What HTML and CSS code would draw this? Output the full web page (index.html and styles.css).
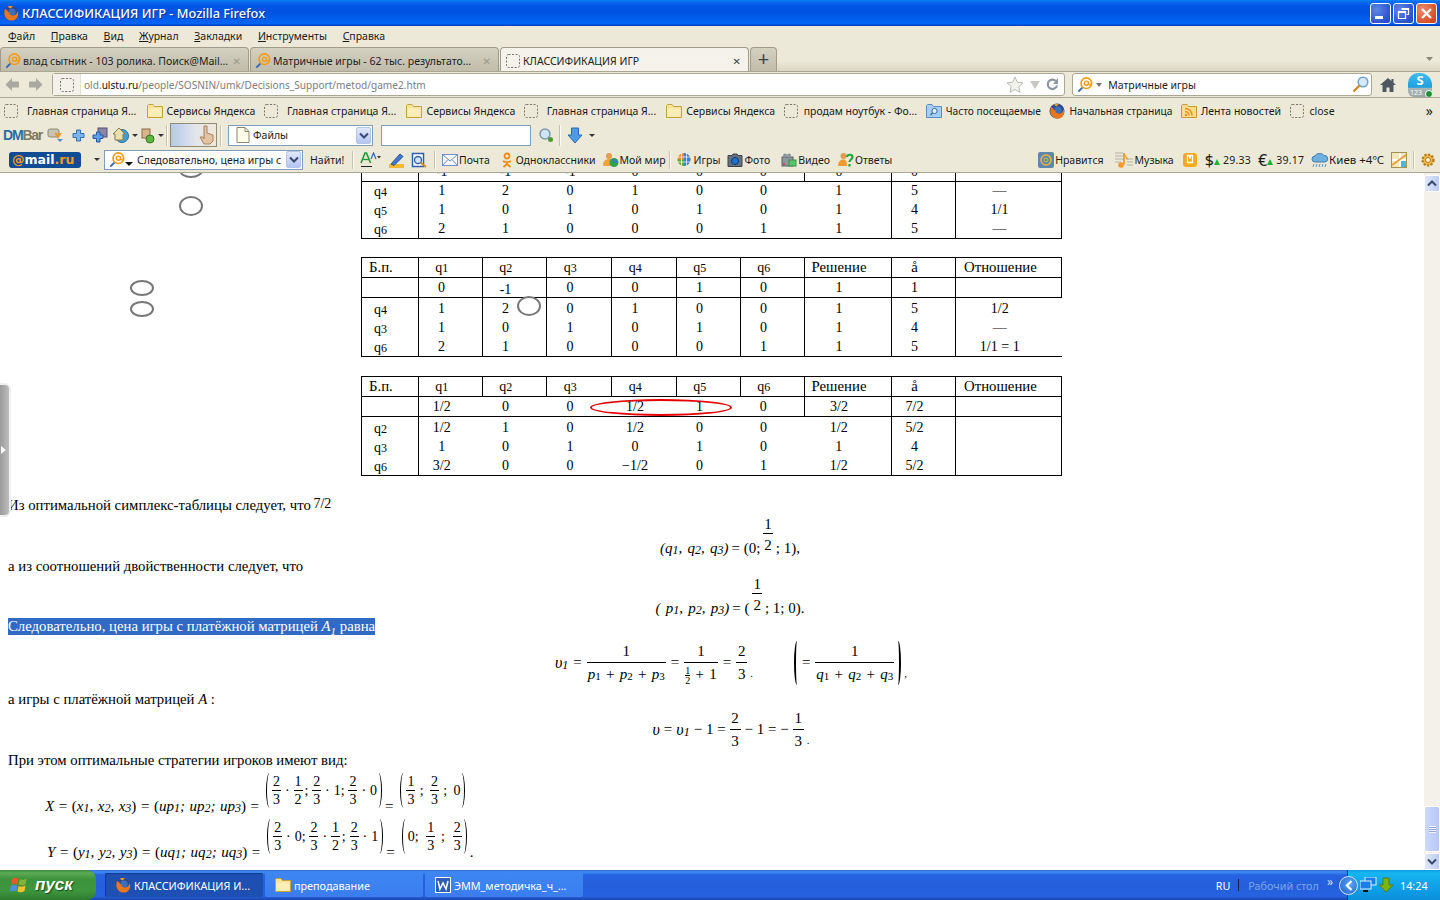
FILE: index.html
```html
<!DOCTYPE html>
<html lang="ru">
<head>
<meta charset="utf-8">
<title>КЛАССИФИКАЦИЯ ИГР - Mozilla Firefox</title>
<link rel="stylesheet" href="styles.css">
</head>
<body>
<svg class="defs" width="0" height="0" aria-hidden="true">
  <symbol id="fox" viewBox="0 0 16 16"><circle cx="8" cy="8" r="7.5" fill="#2b4a8c"/><circle cx="9" cy="7" r="3.6" fill="#3a6fc0"/><path d="M2 4c-1 3-1.400 7 2 10 3 2.500 8 2 10-1 1.500-2.300 1.500-5 .5-7-.3 2.500-2 4.500-4.500 4.500C7.500 10.500 6 9 6.500 7 5 7.500 4 6.500 4.500 5 3.500 5 2.500 4.500 2 4z" fill="#e8761c"/><path d="M5 1.500c2-1 4-.5 5 .5-1 0-2 .5-2.500 1.500C6.500 3 5.500 2.500 5 1.500z" fill="#f0a030"/></symbol>
  <symbol id="at" viewBox="0 0 18 18"><circle cx="10.500" cy="7" r="6" fill="none" stroke="#f59a12" stroke-width="1.800"/><circle cx="10.500" cy="7" r="2.300" fill="none" stroke="#f59a12" stroke-width="1.500"/><path d="M13 5v3c0 1.500 2 1 2.300-.5" fill="none" stroke="#f59a12" stroke-width="1.200"/><path d="M6 12 1.500 16.500" stroke="#3467b8" stroke-width="2.200"/></symbol>
  <symbol id="dash" viewBox="0 0 14 14"><rect x=".5" y=".5" width="13" height="13" rx="2" fill="none" stroke="#77756a" stroke-dasharray="2 1.500"/></symbol>
  <symbol id="folder" viewBox="0 0 16 16"><path d="M.5 4V2.500L1.500 1.500H6L7.500 3.500H15.500V14.500H.5z" fill="#f6e39a" stroke="#c7a33f"/><path d="M1.500 5.500H14.500V13.500H1.500z" fill="#fbeeb8"/></symbol>
  <symbol id="bfolder" viewBox="0 0 16 16"><path d="M.5 4V2.500L1.500 1.500H6L7.500 3.500H15.500V14.500H.5z" fill="#a9cdf0" stroke="#5a8cc0"/><circle cx="8.500" cy="8" r="2.600" fill="#e8f2fb" stroke="#3a6aa0"/><path d="M6.500 10 4.500 12" stroke="#3a6aa0" stroke-width="1.500"/></symbol>
  <symbol id="rss" viewBox="0 0 16 16"><path d="M.5 4V2.500L1.500 1.500H6L7.500 3.500H15.500V14.500H.5z" fill="#f6dd90" stroke="#c79a35"/><circle cx="5" cy="12" r="1.300" fill="#ef8f1c"/><path d="M4 8.500a4 4 0 0 1 4 4M4 5.500a7 7 0 0 1 7 7" fill="none" stroke="#ef8f1c" stroke-width="1.500"/></symbol>
  <symbol id="glass" viewBox="0 0 16 16"><circle cx="7" cy="7" r="5" fill="#cfe4f5" stroke="#7e97ad" stroke-width="1.500"/><circle cx="12.500" cy="12.500" r="2.500" fill="#4e9c2e"/></symbol>
  <symbol id="chev" viewBox="0 0 10 7"><path d="M1 1.500 5 5.500 9 1.500" fill="none" stroke="#39486e" stroke-width="2"/></symbol>
</svg>

<div class="window">
  <header class="titlebar">
    <svg class="title-ico"><use href="#fox"/></svg>
    <span class="title-text">КЛАССИФИКАЦИЯ ИГР - Mozilla Firefox</span>
    <div class="winbtns">
      <span class="winbtn"><span class="w-min"></span></span>
      <span class="winbtn"><svg width="13" height="13" viewBox="0 0 13 13"><path d="M4.500 1.500h7v6h-2M1.500 4.500h7v7h-7z M1.500 5.500h7 M4.500 2.500h7" fill="none" stroke="#fff" stroke-width="1.200"/></svg></span>
      <span class="winbtn winbtn-close"><svg width="13" height="13" viewBox="0 0 13 13"><path d="M2 2l9 9M11 2l-9 9" stroke="#fff" stroke-width="2.200"/></svg></span>
    </div>
  </header>

  <nav class="menubar">
    <span><u>Ф</u>айл</span><span><u>П</u>равка</span><span><u>В</u>ид</span><span><u>Ж</u>урнал</span><span><u>З</u>акладки</span><span><u>И</u>нструменты</span><span><u>С</u>правка</span>
  </nav>

  <div class="tabbar">
    <div class="tab"><svg class="ic16"><use href="#at"/></svg><span class="tab-label">влад сытник - 103 ролика. Поиск@Mail...</span><span class="tab-x">✕</span></div>
    <div class="tab"><svg class="ic16"><use href="#at"/></svg><span class="tab-label">Матричные игры - 62 тыс. результато...</span><span class="tab-x">✕</span></div>
    <div class="tab tab-active"><svg class="ic14"><use href="#dash"/></svg><span class="tab-label">КЛАССИФИКАЦИЯ ИГР</span><span class="tab-x">✕</span></div>
    <div class="tab-new">+</div>
    <svg class="tab-more" width="7" height="4" viewBox="0 0 7 4"><path d="M0 0h7L3.500 4z" fill="#8a8878"/></svg>
  </div>

  <div class="navbar">
    <svg class="nav-arrow" width="17" height="15" viewBox="0 0 17 15"><path d="M8 1 1.500 7.500 8 14V10.500h7v-6H8z" fill="#aaa99f"/></svg>
    <svg class="nav-arrow" width="17" height="15" viewBox="0 0 17 15"><path d="M9 1l6.500 6.500L9 14V10.500H2v-6h7z" fill="#aaa99f"/></svg>
    <div class="urlbox">
      <span class="url-ic"><svg class="ic14"><use href="#dash"/></svg></span>
      <span class="url-text">old.<b>ulstu.ru</b>/people/SOSNIN/umk/Decisions_Support/metod/game2.htm</span>
      <svg width="18" height="17" viewBox="0 0 18 17"><path d="M9 1l2.400 5.300 5.600.6-4.200 3.800 1.200 5.600L9 13.500 4 16.300l1.200-5.600L1 6.900l5.600-.6z" fill="#f2f2ee" stroke="#b9b9b2"/></svg>
      <svg width="12" height="8" viewBox="0 0 12 8"><path d="M1 0h10L6 8z" fill="#c7c7c3"/></svg>
      <svg width="13" height="13" viewBox="0 0 13 13"><path d="M11 7.500A4.700 4.700 0 1 1 9.800 3" fill="none" stroke="#8b97a2" stroke-width="2.200"/><path d="M12 0v6H7z" fill="#8b97a2"/></svg>
    </div>
    <div class="searchbox">
      <svg class="ic16"><use href="#at"/></svg>
      <svg width="6" height="4" viewBox="0 0 6 4"><path d="M0 0h6L3 4z" fill="#777"/></svg>
      <span class="search-text">Матричные игры</span>
      <svg width="17" height="17" viewBox="0 0 17 17"><circle cx="11" cy="6" r="4.800" fill="#d6e9f8" stroke="#6f9fcb" stroke-width="1.500"/><path d="M7.500 9.500 1.500 15.500" stroke="#d68a28" stroke-width="2.400"/></svg>
    </div>
    <svg class="home" width="16" height="14" viewBox="0 0 16 14"><path d="M8 0 0 7h2.500v7H6.500V9.500h3V14h4V7H16l-2.500-2.200V1h-2v2z" fill="#4d5a5f"/></svg>
    <span class="skype"><span class="skype-s">S</span><span class="skype-num">123</span><span class="skype-dot"></span></span>
  </div>

  <div class="bookbar">
    <span class="bm"><svg class="ic14"><use href="#dash"/></svg><span class="bm-w">Главная страница Я...</span></span>
    <span class="bm"><svg class="ic16"><use href="#folder"/></svg>Сервисы Яндекса</span>
    <span class="bm"><svg class="ic14"><use href="#dash"/></svg><span class="bm-w">Главная страница Я...</span></span>
    <span class="bm"><svg class="ic16"><use href="#folder"/></svg>Сервисы Яндекса</span>
    <span class="bm"><svg class="ic14"><use href="#dash"/></svg><span class="bm-w">Главная страница Я...</span></span>
    <span class="bm"><svg class="ic16"><use href="#folder"/></svg>Сервисы Яндекса</span>
    <span class="bm"><svg class="ic14"><use href="#dash"/></svg><span class="bm-n">продам ноутбук - Фо...</span></span>
    <span class="bm bm-s"><svg class="ic16"><use href="#bfolder"/></svg>Часто посещаемые</span>
    <span class="bm bm-s"><svg class="ic16"><use href="#fox"/></svg>Начальная страница</span>
    <span class="bm"><svg class="ic16"><use href="#rss"/></svg>Лента новостей</span>
    <span class="bm"><svg class="ic14"><use href="#dash"/></svg><span class="bm-n">close</span></span>
    <span class="bm-more">»</span>
  </div>

  <div class="dmbar">
    <span class="dm-logo">DM<i>Bar</i></span>
    <svg class="dm-i1" width="16" height="16" viewBox="0 0 16 16"><rect x="1" y="2" width="11" height="8" rx="2" fill="#c9c4b0" stroke="#8d8a78"/><path d="M7 6h8l-4 6z" fill="#e59a3c"/><path d="M10 12l3 3 3-3" fill="#4a8fd6"/></svg>
    <svg class="dm-i2" width="13" height="13" viewBox="0 0 13 13"><path d="M4.500 1h4v3.500H12v4H8.500V12h-4V8.500H1v-4h3.500z" fill="#7db5ee" stroke="#2f6fb5"/></svg>
    <svg class="dm-i3" width="16" height="16" viewBox="0 0 16 16"><rect x="6" y="1" width="9" height="9" fill="#8b86a8" stroke="#55506e"/><path d="M4.500 5h3.500v3h3v3.500H8v3.500H4.500v-3.500H1V8h3.500z" fill="#5f9ee6" stroke="#2259a5"/></svg>
    <svg class="dm-i4" width="17" height="16" viewBox="0 0 17 16"><circle cx="9" cy="9" r="6.500" fill="#3fa0d8" stroke="#2b6e9c"/><path d="M6 1 0 7h2v6h8V7h2z" fill="#eadfae" stroke="#8d7d43"/></svg><span class="drop"></span>
    <svg class="dm-i5" width="16" height="17" viewBox="0 0 16 17"><rect x="2" y="2" width="8" height="9" fill="#d9b38c" stroke="#8d6b49"/><circle cx="10" cy="12" r="4" fill="#62b343" stroke="#2f7a19"/></svg><span class="drop"></span>
    <span class="sep sep-a"></span>
    <span class="dm-btn"><svg width="16" height="20" viewBox="0 0 16 20"><path d="M6 1h3v7l6 2v6l-3 3H6L2 12h3l1 2z" fill="#e4c3a3" stroke="#a8835e"/></svg></span>
    <span class="sep sep-b"></span>
    <span class="dm-select"><svg width="14" height="16" viewBox="0 0 14 16"><path d="M1 .5h8l4 4v11H1z" fill="#fffbe9" stroke="#8b8671"/><path d="M9 .5v4h4" fill="none" stroke="#8b8671"/></svg><span class="dm-select-text">Файлы</span><span class="combo-btn"><svg width="10" height="7"><use href="#chev"/></svg></span></span>
    <span class="dm-input"></span>
    <svg class="dm-glass" width="16" height="16"><use href="#glass"/></svg>
    <span class="sep sep-c"></span>
    <svg class="dm-down" width="14" height="17" viewBox="0 0 14 17"><path d="M3.500 1h7v7H14L7 16 0 8h3.500z" fill="#4d9be6" stroke="#2a6bb0"/></svg><span class="drop drop-d"></span>
  </div>

  <div class="mailbar">
    <span class="mail-logo"><span class="mail-at">@</span>mail<span class="mail-ru">.ru</span></span>
    <span class="drop drop-m"></span>
    <span class="mail-select"><svg class="ic16"><use href="#at"/></svg><span class="drop drop-s"></span><span class="mail-select-text">Следовательно, цена игры с</span><span class="combo-btn"><svg width="10" height="7"><use href="#chev"/></svg></span></span>
    <span class="find">Найти!</span>
    <span class="sep"></span>
    <svg width="21" height="16" viewBox="0 0 21 16"><path d="M1 11 5 1h1.500l4 10" fill="none" stroke="#1d9c3a" stroke-width="1.600"/><path d="M3 7.500h6" stroke="#1d9c3a" stroke-width="1.300"/><path d="M11 7l2.500-6L16 7" fill="none" stroke="#3266b5" stroke-width="1.200"/><path d="M1 14.500h11" stroke="#222"/><path d="M17 4h4l-2 2.500z" fill="#333"/></svg>
    <svg width="16" height="16" viewBox="0 0 16 16"><path d="M1 12h15v4H1z" fill="#f3bc2e"/><path d="M3 12 12 2l3 2.500-9 9z" fill="#4477cf" stroke="#2b4f93"/></svg>
    <svg width="16" height="16" viewBox="0 0 16 16"><path d="M1.500 1.500h11v13h-11z" fill="#fff" stroke="#2e5fa8" stroke-width="1.500"/><circle cx="7" cy="8" r="3.500" fill="#cfe4f7" stroke="#2e5fa8" stroke-width="1.300"/><path d="M9.500 10.500 15 15" stroke="#d28a24" stroke-width="2"/></svg>
    <span class="sep"></span>
    <span class="ml"><svg width="16" height="12" viewBox="0 0 16 12"><rect x=".5" y=".5" width="15" height="11" fill="#f4f8fc" stroke="#6b93c4"/><path d="M.5.500 8 7l7.500-6.500M.5 11.500 6 5.500M15.500 11.500 10 5.500" fill="none" stroke="#6b93c4"/></svg>Почта</span>
    <span class="ml ml-g"><svg width="12" height="16" viewBox="0 0 12 16"><circle cx="6" cy="4" r="2.500" fill="none" stroke="#f08a12" stroke-width="1.800"/><path d="M2 9c2 1.500 6 1.500 8 0M6 10.500V12M2.500 15 6 12l3.500 3" fill="none" stroke="#f08a12" stroke-width="1.800"/></svg>Одноклассники</span>
    <span class="ml ml-h"><svg width="16" height="16" viewBox="0 0 16 16"><circle cx="6" cy="4" r="3" fill="#e39b4d"/><path d="M0 13c0-4 3-6 6-6s4 2 4 4v3H1z" fill="#f2a33a"/><circle cx="11" cy="10.500" r="4.500" fill="#2ea24b"/><path d="M9 7.500a4.500 4.500 0 0 1 6 3c-2 1.500-4 0-6-3z" fill="#2f7fd8"/></svg>Мой мир</span>
    <span class="sep"></span>
    <span class="ml"><svg width="14" height="15" viewBox="0 0 14 15"><circle cx="7" cy="7.500" r="6.500" fill="#e78b2b"/><path d="M7 1a6.500 6.500 0 0 1 0 13V7.500z" fill="#2f86d6"/><path d="M.5 7.500H7V14a6.500 6.500 0 0 1-6.500-6.500z" fill="#5da93c"/><path d="M.5 5h13M.5 10h13M4.500 1v13M9.500 1v13" stroke="#fff" stroke-width=".7"/></svg><span class="ml-t3">Игры</span></span>
    <span class="ml"><svg width="16" height="14" viewBox="0 0 16 14"><path d="M1 2.500h4L6 1h4l1 1.500h4v11H1z" fill="#65717e" stroke="#3b434c"/><circle cx="8" cy="8" r="3.500" fill="#1e74d6" stroke="#14375f"/></svg>Фото</span>
    <span class="ml ml-v"><svg width="16" height="14" viewBox="0 0 16 14"><rect x="1" y="4" width="11" height="9" fill="#8b98a2" stroke="#55606a"/><circle cx="4" cy="2.500" r="2" fill="#89949c"/><circle cx="8" cy="2.500" r="2" fill="#89949c"/><rect x="8" y="7" width="7" height="6" fill="#5cc46a" stroke="#3b8f47"/><circle cx="3" cy="11" r="1" fill="#d33"/></svg>Видео</span>
    <span class="ml ml-a"><svg width="16" height="16" viewBox="0 0 16 16"><circle cx="5.500" cy="4" r="3" fill="#e39b4d"/><path d="M0 14c0-5 3-6.500 5.500-6.500S9 10 9 14z" fill="#f29a30"/><path d="M9 5c0-3 5.500-3 5.500 0 0 2.500-3 2.500-3 5M11.500 12v2.500" fill="none" stroke="#1fa93b" stroke-width="2.200"/></svg>Ответы</span>
    <span class="ml ml-r"><svg width="16" height="16" viewBox="0 0 16 16"><rect width="16" height="16" rx="2" fill="#5e87ad"/><circle cx="8" cy="8" r="5" fill="none" stroke="#f0b63a" stroke-width="1.500"/><circle cx="8" cy="8" r="2" fill="none" stroke="#f0b63a"/></svg>Нравится</span>
    <span class="ml"><svg width="20" height="16" viewBox="0 0 20 16"><path d="M1 1h8M1 4h8M1 7h8M1 10h6M12 7h7M13 10h6M13 13h6" stroke="#cfcdc2" stroke-width="2"/><path d="M10 1v11.500" stroke="#f29b2b" stroke-width="1.800"/><circle cx="7" cy="13" r="2.800" fill="#f29b2b"/><path d="M10 1l5 7-3-1.500" fill="#f29b2b"/></svg>Музыка</span>
    <svg class="mb-box" width="14" height="14" viewBox="0 0 14 14"><rect width="14" height="14" rx="3" fill="#f7a823"/><path d="M4.500 2.500h5v7h-5z" fill="none" stroke="#fff" stroke-width="1.300"/><path d="M6 2.500h2v3H6z" fill="#fff"/></svg>
    <span class="rate"><span class="rate-sym">$</span><span class="up"></span>29.33</span>
    <span class="rate"><span class="rate-sym">€</span><span class="up"></span>39.17</span>
    <span class="ml ml-k"><svg width="17" height="16" viewBox="0 0 17 16"><path d="M4 10a3 3 0 0 1 0-6c1-3 7-3.500 9-.5a3 3 0 0 1 1 6.500z" fill="#6fb0de" stroke="#3f7eb2"/><path d="M3 12 2 15M6 12 5 15M9 12 8 15M12 12 11 15M15 12 14 15" stroke="#4b94ce"/></svg>Киев +4ºC</span>
    <svg class="mb-map" width="16" height="16" viewBox="0 0 16 16"><rect x=".5" y=".5" width="15" height="15" fill="#f5e8b8" stroke="#a58f55"/><path d="M1 8h14M9 1v14" stroke="#fff" stroke-width="2"/><path d="M1 13 15 3" stroke="#e2a33d" stroke-width="2"/><path d="M10 9h5v6h-5z" fill="#46b9d8"/></svg>
    <span class="sep sep-g"></span>
    <svg width="16" height="16" viewBox="0 0 16 16"><circle cx="8" cy="8" r="5.500" fill="#f0b74a" stroke="#b57a18" stroke-width="2.200" stroke-dasharray="2.200 1.400"/><circle cx="8" cy="8" r="2.500" fill="#fff4d8" stroke="#b57a18"/></svg>
  </div>

  <main class="viewport">
    <div class="doc">
      <table class="simplex simplex-first">
        <colgroup><col class="c-l"><col class="c-a"><col class="c-a"><col class="c-b"><col class="c-b"><col class="c-a"><col class="c-a"><col class="c-s"><col class="c-a"><col class="c-r"></colgroup>
        <tr class="h"><td class="lh">Б.п.</td><td>q<sub>1</sub></td><td>q<sub>2</sub></td><td>q<sub>3</sub></td><td>q<sub>4</sub></td><td>q<sub>5</sub></td><td>q<sub>6</sub></td><td class="th">Решение</td><td class="th">å</td><td class="th tl">Отношение</td></tr>
        <tr class="r"><td></td><td>-1</td><td>-1</td><td>-1</td><td>0</td><td>0</td><td>0</td><td>0</td><td>0</td><td></td></tr>
        <tr class="b"><td class="lb">q<sub>4</sub></td><td>1</td><td>2</td><td>0</td><td>1</td><td>0</td><td>0</td><td>1</td><td>5</td><td>—</td></tr>
        <tr class="b"><td class="lb">q<sub>5</sub></td><td>1</td><td>0</td><td>1</td><td>0</td><td>1</td><td>0</td><td>1</td><td>4</td><td>1/1</td></tr>
        <tr class="b last"><td class="lb">q<sub>6</sub></td><td>2</td><td>1</td><td>0</td><td>0</td><td>0</td><td>1</td><td>1</td><td>5</td><td>—</td></tr>
      </table>

      <table class="simplex simplex-grid lift">
        <colgroup><col class="c-l"><col class="c-a"><col class="c-a"><col class="c-b"><col class="c-b"><col class="c-a"><col class="c-a"><col class="c-s"><col class="c-a"><col class="c-r"></colgroup>
        <tr class="h"><td class="lh">Б.п.</td><td>q<sub>1</sub></td><td>q<sub>2</sub></td><td>q<sub>3</sub></td><td>q<sub>4</sub></td><td>q<sub>5</sub></td><td>q<sub>6</sub></td><td class="th">Решение</td><td class="th">å</td><td class="th tl">Отношение</td></tr>
        <tr class="r"><td></td><td>0</td><td class="dn">-1</td><td>0</td><td>0</td><td>1</td><td>0</td><td>1</td><td>1</td><td></td></tr>
        <tr class="b"><td class="lb">q<sub>4</sub></td><td>1</td><td>2</td><td>0</td><td>1</td><td>0</td><td>0</td><td>1</td><td>5</td><td>1/2</td></tr>
        <tr class="b"><td class="lb">q<sub>3</sub></td><td>1</td><td>0</td><td>1</td><td>0</td><td>1</td><td>0</td><td>1</td><td>4</td><td>—</td></tr>
        <tr class="b last"><td class="lb">q<sub>6</sub></td><td>2</td><td>1</td><td>0</td><td>0</td><td>0</td><td>1</td><td>1</td><td>5</td><td>1/1 = 1</td></tr>
      </table>

      <table class="simplex simplex-third lift">
        <colgroup><col class="c-l"><col class="c-a"><col class="c-a"><col class="c-b"><col class="c-b"><col class="c-a"><col class="c-a"><col class="c-s"><col class="c-a"><col class="c-r"></colgroup>
        <tr class="h"><td class="lh">Б.п.</td><td>q<sub>1</sub></td><td>q<sub>2</sub></td><td>q<sub>3</sub></td><td>q<sub>4</sub></td><td>q<sub>5</sub></td><td>q<sub>6</sub></td><td class="th">Решение</td><td class="th">å</td><td class="th tl">Отношение</td></tr>
        <tr class="r"><td></td><td>1/2</td><td>0</td><td>0</td><td>1/2</td><td>1</td><td>0</td><td>3/2</td><td>7/2</td><td></td></tr>
        <tr class="b"><td class="lb">q<sub>2</sub></td><td>1/2</td><td>1</td><td>0</td><td>1/2</td><td>0</td><td>0</td><td>1/2</td><td>5/2</td><td></td></tr>
        <tr class="b"><td class="lb">q<sub>3</sub></td><td>1</td><td>0</td><td>1</td><td>0</td><td>1</td><td>0</td><td>1</td><td>4</td><td></td></tr>
        <tr class="b last"><td class="lb">q<sub>6</sub></td><td>3/2</td><td>0</td><td>0</td><td>−1/2</td><td>0</td><td>1</td><td>1/2</td><td>5/2</td><td></td></tr>
      </table>

      <p class="para para-1">Из оптимальной симплекс-таблицы следует, что <span class="sup72">7/2</span></p>

      <div class="eq eq-1"><span class="v">(q<sub>1</sub>, q<sub>2</sub>, q<sub>3</sub>)</span><span> = (0;</span><span class="frac"><span class="num">1</span><span class="den">2</span></span><span>; 1),</span></div>

      <p class="para para-2">а из соотношений двойственности следует, что</p>

      <div class="eq eq-2"><span class="v">( p<sub>1</sub>, p<sub>2</sub>, p<sub>3</sub>)</span><span> = (</span><span class="frac"><span class="num">1</span><span class="den">2</span></span><span>; 1; 0).</span></div>

      <p class="para para-3"><span class="sel">Следовательно, цена игры с платёжной матрицей <i>A<sub>1</sub></i> равна</span></p>

      <div class="eq eq-3">
        <span class="v vv">υ<sub>1</sub></span><span class="op">=</span>
        <span class="frac frac-w"><span class="num">1</span><span class="den den-l"><i>p</i><sub>1</sub> + <i>p</i><sub>2</sub> + <i>p</i><sub>3</sub></span></span><span class="op">=</span>
        <span class="frac frac-w"><span class="num">1</span><span class="den den-l"><span class="mini"><span class="mini-n">1</span><span class="mini-d">2</span></span> + 1</span></span><span class="op">=</span>
        <span class="frac frac-w"><span class="num">2</span><span class="den den-l">3</span></span><span class="dot">.</span>
        <span class="bigp bigp-l"></span><span class="op op-t">=</span>
        <span class="frac frac-w"><span class="num">1</span><span class="den den-l"><i>q</i><sub>1</sub> + <i>q</i><sub>2</sub> + <i>q</i><sub>3</sub></span></span>
        <span class="bigp bigp-r"></span><span class="dot">,</span>
      </div>

      <p class="para para-4">а игры с платёжной матрицей <i>А</i> :</p>

      <div class="eq eq-4">
        <span class="v vv">υ</span><span class="op">=</span><span class="v vv">υ<sub>1</sub></span><span class="op">− 1 =</span>
        <span class="frac frac-w"><span class="num">2</span><span class="den den-l">3</span></span><span class="op">− 1 = −</span>
        <span class="frac frac-w"><span class="num">1</span><span class="den den-l">3</span></span><span class="dot">.</span>
      </div>

      <p class="para para-5">При этом оптимальные стратегии игроков имеют вид:</p>

      <div class="strat strat-x">
        <span class="stxt"><i>X</i> = (<i>x<sub>1</sub>, x<sub>2</sub>, x<sub>3</sub></i>) = (<i>up<sub>1</sub>; up<sub>2</sub>; up<sub>3</sub></i>) =</span>
        <span class="group g-a"><span class="frac"><span class="num">2</span><span class="den">3</span></span><span>·</span><span class="frac"><span class="num">1</span><span class="den">2</span></span><span class="gs">;</span><span class="frac"><span class="num">2</span><span class="den">3</span></span><span>·</span><span>1;</span><span class="frac gm"><span class="num">2</span><span class="den">3</span></span><span>·</span><span>0</span></span>
        <span class="stxt">=</span>
        <span class="group g-b"><span class="frac"><span class="num">1</span><span class="den">3</span></span><span class="gs">;</span><span class="frac"><span class="num">2</span><span class="den">3</span></span><span class="gs">;</span><span>0</span></span>
      </div>
      <div class="strat strat-y">
        <span class="stxt"><i>Y</i> = (<i>y<sub>1</sub>, y<sub>2</sub>, y<sub>3</sub></i>) = (<i>uq<sub>1</sub>; uq<sub>2</sub>; uq<sub>3</sub></i>) =</span>
        <span class="group g-a"><span class="frac"><span class="num">2</span><span class="den">3</span></span><span>·</span><span>0;</span><span class="frac gm"><span class="num">2</span><span class="den">3</span></span><span>·</span><span class="frac"><span class="num">1</span><span class="den">2</span></span><span class="gs">;</span><span class="frac"><span class="num">2</span><span class="den">3</span></span><span>·</span><span>1</span></span>
        <span class="stxt">=</span>
        <span class="group g-b"><span>0;</span><span class="frac"><span class="num">1</span><span class="den">3</span></span><span class="gs">;</span><span class="frac"><span class="num">2</span><span class="den">3</span></span></span>
        <span class="stxt">.</span>
      </div>

      <span class="oval oval-a"></span>
      <span class="oval oval-b"></span>
      <span class="oval oval-c"></span>
      <span class="oval oval-d"></span>
      <span class="oval oval-e"></span>
      <span class="oval-red"></span>
    </div>

    <div class="scrollbar">
      <span class="sb-btn"><svg width="10" height="7" viewBox="0 0 10 7"><path d="M1 5.500 5 1.500 9 5.500" fill="none" stroke="#39486e" stroke-width="2"/></svg></span>
      <span class="sb-track"><span class="sb-thumb"><span class="grip"></span></span></span>
      <span class="sb-btn"><svg width="10" height="7"><use href="#chev"/></svg></span>
    </div>

    <div class="side-handle"><span class="side-arrow"></span></div>
  </main>

  <footer class="taskbar">
    <div class="start">
      <svg width="20" height="19" viewBox="0 0 20 19"><path d="M2 3c2-1.500 4-1.500 6.500-.5L7.500 8.500C5 7.500 3 7.500 1 9z" fill="#e8592c"/><path d="M10 3c2 1 4 1 6.500-.5L15.500 8c-2 1.500-4.500 1.500-7 .5z" fill="#7cb63b"/><path d="M.8 10c2-1.500 4-1.500 6.500-.5L6.300 15.500c-2.500-1-4.500-1-6.500.5z" fill="#4d8fe0"/><path d="M8.500 10c2 1 4 1 7-.5l-1 5.500c-2.500 1.500-5 1.500-7 .5z" fill="#f5c227"/></svg>
      <span class="start-text">пуск</span>
    </div>
    <div class="task task-active"><svg class="ic16"><use href="#fox"/></svg><span>КЛАССИФИКАЦИЯ И...</span></div>
    <div class="task"><svg class="ic16"><use href="#folder"/></svg><span>преподавание</span></div>
    <div class="task"><svg width="16" height="16" viewBox="0 0 16 16"><rect width="16" height="16" fill="#fff"/><rect x="1" y="1" width="14" height="14" fill="#2e5fb5"/><path d="M3 4l2 8 3-6 3 6 2-8" fill="none" stroke="#fff" stroke-width="1.500"/></svg><span>ЭММ_методичка_ч_...</span></div>
    <div class="tray-left">
      <span class="lang">RU</span><span class="tray-bar"></span><span class="desk">Рабочий стол</span><span class="tray-more">»</span>
    </div>
    <div class="tray">
      <span class="tray-arrow"><svg width="8" height="11" viewBox="0 0 8 11"><path d="M6.500 1 2 5.500l4.500 4.500" fill="none" stroke="#fff" stroke-width="2.200"/></svg></span>
      <svg width="17" height="16" viewBox="0 0 17 16"><rect x="5" y="0" width="11" height="8" fill="#1b7ee8" stroke="#d7f3ff"/><rect x="0" y="4" width="11" height="8" fill="#1b7ee8" stroke="#d7f3ff"/><path d="M3 14h5" stroke="#111" stroke-width="2"/></svg>
      <svg width="16" height="16" viewBox="0 0 16 16"><path d="M5 1h6v7h4L8 15 1 8h4z" fill="#7cb50a" stroke="#567d08"/></svg>
      <span class="clock">14:24</span>
    </div>
  </footer>
</div>
</body>
</html>
```

FILE: styles.css
```css
* { box-sizing: border-box; }
html, body { margin: 0; height: 100%; overflow: hidden; }
body { font-family: "Noto Sans", "DejaVu Sans", sans-serif; font-size: 10.5px; color: #1a1a1a; background: #ece9d8; }
.defs { position: absolute; }
.window { width: 1440px; height: 900px; display: flex; flex-direction: column; overflow: hidden; }
svg { flex: none; display: block; }
.ic16 { width: 16px; height: 16px; }
.ic14 { width: 14px; height: 14px; }

/* title bar */
.titlebar { height: 26px; display: flex; align-items: center; padding: 0 3px 0 3px; color: #fff;
  background: linear-gradient(#0a84f5 0, #0b69ef 2px, #0055e5 6px, #0053e0 50%, #0061f2 80%, #0066f5 92%, #0046cf 96%, #003dbd 100%); }
.title-ico { width: 16px; height: 16px; }
.title-text { margin-left: 3px; font-family: "Noto Sans", sans-serif; font-size: 12.8px; font-weight: 500; text-shadow: 1px 1px 0 #0a2f9a; white-space: nowrap; }
.winbtns { margin-left: auto; display: flex; gap: 2px; }
.winbtn { width: 21px; height: 21px; border: 1px solid #fff; border-radius: 3px; background: radial-gradient(circle at 30% 30%, #5d87e8, #2c55cf 70%, #2048c0); display: flex; align-items: center; justify-content: center; }
.w-min { width: 8px; height: 3px; background: #fff; margin-top: 8px; margin-right: 3px; }
.winbtn-close { background: radial-gradient(circle at 30% 30%, #ea8d6f, #d9512b 70%, #c23c17); }

/* menu */
.menubar { height: 20px; display: flex; align-items: center; gap: 15.700px; padding-left: 8px; background: #ece9d8; }

/* tabs */
.tabbar { height: 26px; display: flex; align-items: flex-end; position: relative;
  background: linear-gradient(#ece9d8 0, #ece9d8 60%, #d9d6c6 100%); border-bottom: 1px solid #aaa692; }
.tab { width: 249px; height: 24px; margin-right: 1px; display: flex; align-items: center; gap: 2px; padding: 3px 7px 0 4px;
  background: linear-gradient(#d4d1c1, #bfbcab); border: 1px solid #a09c89; border-bottom: none; border-radius: 4px 4px 0 0; color: #222; }
.tab-active { background: linear-gradient(#f4f2ea, #f5f3ec); gap: 3px; padding-left: 5px; }
.tab-label { flex: 1; white-space: nowrap; overflow: hidden; }
.tab-x { color: #9a9888; font-size: 10px; }
.tab-active .tab-x { color: #444; }
.tab-new { width: 27px; height: 24px; border: 1px solid #a09c89; border-bottom: none; border-radius: 4px 4px 0 0; background: linear-gradient(#d4d1c1, #bfbcab); font-size: 20px; line-height: 21px; text-align: center; color: #3c4248; }
.tab-more { position: absolute; right: 7px; top: 11px; }

/* navigation */
.navbar { height: 25px; display: flex; align-items: center; padding: 0 8px 0 4px; background: #ece9d8; }
.nav-arrow { margin-right: 6px; }
.urlbox { margin-left: 2px; width: 1014px; height: 23px; background: #fff; border: 1px solid #aaa795; border-radius: 3px; display: flex; align-items: center; padding-right: 5px; gap: 5px; color: #7d7d7d; }
.url-ic { width: 28px; height: 100%; background: #f3f1ea; display: flex; align-items: center; justify-content: center; border-right: 1px solid #e3e1d6; }
.url-text { flex: 1; margin-left: -2px; font-size: 10.1px; }
.url-text b { font-weight: 400; color: #111; }
.searchbox { margin-left: 7px; width: 300px; height: 23px; background: #fff; border: 1px solid #aaa795; border-radius: 3px; display: flex; align-items: center; padding: 0 2px 0 4px; gap: 3px; }
.search-text { flex: 1; margin-left: 3px; }
.home { margin-left: 8px; }
.skype { position: relative; width: 24px; height: 24px; margin-left: 12px; border-radius: 10px 12px 6px 6px; background: linear-gradient(#3ebcf0 0, #1f9fe0 60%, #a9b5b5 62%, #9aa8a8 100%); color: #fff; font-weight: 700; font-size: 13px; text-align: center; line-height: 14px; }
.skype-s { display: block; }
.skype-num { position: absolute; left: 2px; bottom: 0; font-size: 7px; line-height: 9px; font-weight: 400; }
.skype-dot { position: absolute; right: -1px; bottom: -1px; width: 8px; height: 8px; border-radius: 50%; background: #17912e; border: 1px solid #fff; }

/* bookmarks */
.bookbar { height: 25px; display: flex; align-items: center; padding: 2px 0 0 4px; background: #ece9d8; border-top: 1px solid #aaa795; white-space: nowrap; position: relative; }
.bm { display: flex; align-items: center; gap: 4px; margin-right: 8.500px; }
.bm-s { font-size: 10.2px; }
.bm-w { margin-left: 5px; width: 111px; }
.bm-n { margin-left: 2px; }
.bm-more { position: absolute; right: 7px; top: 3px; font-size: 14px; }

/* DM bar */
.dmbar { height: 26px; display: flex; align-items: center; padding-left: 3px; background: #ece9d8; white-space: nowrap; }
.dm-logo { font-family: "Liberation Sans", sans-serif; font-weight: 700; font-size: 14px; letter-spacing: -1.200px; color: #2d6ba3; width: 38px; }
.dm-logo i { font-style: normal; color: #817a5e; }
.dm-i1 { margin-left: 6px; }
.dm-i2 { margin-left: 9px; }
.dm-i3 { margin-left: 7px; }
.dm-i4 { margin-left: 5px; }
.dm-i5 { margin-left: 2px; }
.drop { width: 0; height: 0; border: 3px solid transparent; border-top: 3px solid #333; border-bottom: 0; margin-left: 2px; }
.sep { width: 1px; height: 21px; background: #c5c2b0; box-shadow: 1px 0 0 #fbfaf5; flex: none; }
.sep-a { margin: 0 3px 0 2px; }
.sep-b { margin: 0 7px 0 3px; }
.sep-c { margin: 0 8px 0 5px; }
.dm-btn { width: 47px; height: 24px; border: 1px solid #8e8b76; background: linear-gradient(90deg, #b4c9ea, #e3e5ea 55%, #efe8d8); display: flex; align-items: center; justify-content: flex-end; padding-right: 2px; }
.dm-select { width: 145px; height: 21px; border: 1px solid #7f9db9; background: #fff; display: flex; align-items: center; padding-left: 7px; gap: 3px; }
.dm-select-text { flex: 1; }
.combo-btn { width: 15px; height: 17px; margin-right: 1px; border: 1px solid #b5c5e8; border-radius: 2px; background: linear-gradient(#dfe8fb, #b4c6f0); display: flex; align-items: center; justify-content: center; flex: none; }
.dm-input { width: 150px; height: 21px; border: 1px solid #7f9db9; background: #fff; margin-left: 8px; }
.dm-glass { margin-left: 7px; }
.drop-d { margin-left: 7px; }

/* mail bar */
.mailbar { height: 25px; display: flex; align-items: center; padding-left: 9px; padding-bottom: 1px; background: #ece9d8; white-space: nowrap; border-bottom: 1px solid #aaa795; gap: 7px; }
.mail-logo { width: 72px; height: 16px; border-radius: 3px; background: #0f4c93; color: #fff; font-family: "DejaVu Sans", sans-serif; font-weight: 700; font-size: 12.5px; line-height: 16px; padding-left: 3px; }
.mail-at, .mail-ru { color: #f79a1c; }
.drop-m { margin: 0 -3px 0 6px; }
.mail-select { width: 199px; height: 20px; border: 1px solid #7f9db9; background: #fff; display: flex; align-items: center; padding-left: 4px; }
.drop-s { margin: 9px 4px 0 0; border-width: 4px 4px 0; border-top-color: #111; }
.mail-select-text { flex: 1; overflow: hidden; }
.find { width: 35px; }
.mailbar .sep { margin: 0; height: 18px; }
.ml { display: flex; align-items: center; gap: 1px; }
.ml-g { gap: 3px; margin-left: 4px; }
.ml-h { margin-right: -4px; }
.ml-v { margin-left: 4px; }
.ml-a { margin-left: 1px; }
.ml-t3 { margin-left: 2px; }
.ml-r { margin-left: auto; margin-right: 3px; }
.ml-k { font-size: 11.5px; }
.rate { display: flex; align-items: center; gap: 0; letter-spacing: .2px; }
.rate-sym { font-size: 16px; }
.up { width: 0; height: 0; border: 3px solid transparent; border-top: 0; border-bottom: 6px solid #17b52e; margin: 5px 3px 0 0; }
.mailbar .sep-g { margin: 0 -1px 0 -1px; }
.mb-box { margin: 0 1px 0 2px; }
.mailbar > svg:last-child { margin-right: 4px; }

/* document */
.viewport { position: relative; flex: 1; min-height: 0; display: flex; background: #fff; overflow: hidden; }
.doc { position: relative; width: 1424px; flex: none; padding-left: 8px; font-family: "Liberation Serif", serif; font-size: 14.75px; color: #000; }
.simplex { margin: 0 0 19px 353px; width: 700px; table-layout: fixed; border-collapse: collapse; font-size: 14px; }
.simplex-first { margin-top: -32px; margin-bottom: 18px; }
.c-l { width: 57px; } .c-a { width: 64px; } .c-b { width: 65px; } .c-s { width: 87px; } .c-r { width: 106px; }
.simplex td { padding: 0 18px 0 0; text-align: center; height: 20px; line-height: 16px; vertical-align: middle; white-space: nowrap; }
.simplex tr.b td { height: 19.670px; }
.simplex-first tr.b td { height: 19px; }
.lift tr.b td:not(.lb), .simplex-third tr.r td { padding-top: 2px; }
.simplex sub { font-size: 12px; vertical-align: baseline; letter-spacing: -.3px; line-height: 0; }
.simplex tr.h td, .simplex tr.r td { border-left: 1px solid #000; border-right: 1px solid #000; border-top: 1px solid #000; }
.simplex tr.h td { line-height: 17px; padding-top: 0; }
.simplex tr.h td.th, .simplex tr.h td.lh { padding-top: 0; font-size: 14.800px; line-height: 17px; }
.simplex tr.h td.tl { text-align: left; padding: 0 0 0 8px; }
.simplex tr.h td.lh { text-align: left; padding-left: 7px; }
.simplex tr.r td { border-bottom: 1px solid #000; }
.simplex td.dn { padding-top: 3px; line-height: 15px; }
.simplex td.lb { text-align: left; padding: 3px 0 0 12px; line-height: 15px; }
.simplex-first td.lb { padding-top: 1px; }
.simplex tr.b td:nth-child(1), .simplex tr.b td:nth-child(8), .simplex tr.b td:nth-child(9), .simplex tr.b td:nth-child(10) { border-right: 1px solid #000; }
.simplex tr.b td:nth-child(1) { border-left: 1px solid #000; }
.simplex tr.last td { border-bottom: 1px solid #000; }
.simplex tr.r td:nth-child(n+2):nth-child(-n+6) { border-right: none; }
.simplex tr.r td:nth-child(n+3):nth-child(-n+7) { border-left: none; }
.simplex-grid tr.r td:nth-child(n+2):nth-child(-n+7) { border-right: 1px solid #000; border-left: 1px solid #000; }
.simplex-grid tr.b td { border-right: 1px solid #000; }
.simplex-grid tr.b td:last-child { border-right: none; }

.para { margin: 0; line-height: 17px; white-space: nowrap; }
.para-1 { margin-top: 21px; }
.para-2 { margin-top: 1px; }
.para-3 { margin-top: 1px; }
.para-4 { margin-top: 5px; }
.para-5 { margin-top: 2px; }
.sup72 { font-size: 14px; position: relative; top: -2px; margin-left: -1px; }
.sel { display: inline-block; background: #316ac5; color: #fff; height: 17px; line-height: 17px; padding-right: 0; }
.sel i sub, .para sub { font-size: 11px; line-height: 0; }

.eq { display: flex; justify-content: center; align-items: flex-end; padding-left: 28px; font-size: 15px; line-height: 17px; white-space: nowrap; }
.eq sub { font-size: 12px; line-height: 0; vertical-align: -1px; }
.v { font-style: italic; word-spacing: 1.500px; }
.eq-1 { height: 39px; margin-top: 4px; gap: 3px; }
.eq-2 { height: 39px; margin-top: 3px; gap: 3px; }
.frac { display: inline-flex; flex-direction: column; align-items: center; }
.num { padding: 0 1px; line-height: 18px; }
.den { border-top: 1px solid #000; line-height: 18px; padding: 0 1px; }
.eq-1 .frac .num, .eq-2 .frac .num { line-height: 17px; }
.eq-1 .den, .eq-2 .den { line-height: 23px; }

.eq-3 { height: 46px; margin-top: 5px; align-items: center; padding-left: 30px; }
.eq-4 { height: 40px; margin-top: 2px; align-items: center; padding-left: 30px; }
.vv { font-size: 16px; }
.op { margin: 0 5px; font-size: 15px; }
.eq-4 .op { margin: 0 4px; }
.op-t { margin: 0 5px 0 2px; }
.frac-w .num { line-height: 21px; font-size: 15px; }
.frac-w .den { line-height: 22px; font-size: 15px; }
.den-l { padding: 0 1px; word-spacing: 1.500px; text-align: center; min-width: 11px; }
.den-l sub { font-size: 11px; }
.mini { display: inline-flex; flex-direction: column; align-items: center; vertical-align: middle; font-size: 10px; line-height: 9px; }
.mini-d { border-top: 1px solid #000; }
.dot { margin: 22px 0 0 3px; font-size: 11px; line-height: 11px; }
.bigp { width: 6px; height: 44px; border: 0 solid #000; border-radius: 50%/50%; }
.bigp-l { border-left: 2px solid #000; margin-left: 41px; }
.bigp-r { border-right: 2px solid #000; margin-left: 1px; }

.strat { height: 46px; display: flex; align-items: flex-start; padding-left: 37px; font-size: 15px; white-space: nowrap; line-height: 17px; }
.strat-x { margin-top: 4px; }
.stxt { margin-top: 25px; margin-right: 4px; word-spacing: .8px; }
.stxt sub { font-size: 12px; line-height: 0; vertical-align: -1px; }
.strat-y .stxt:first-child { margin-left: 2px; }
.group + .stxt { margin-left: 3px; }
.group { position: relative; height: 35px; display: inline-flex; align-items: center; gap: 3px; padding: 0 5px 0 6px; margin-left: 3px; font-size: 14px; }
.group::before, .group::after { content: ""; position: absolute; top: 0; bottom: 0; width: 6px; border: 0 solid #000; border-radius: 50%; }
.group::before { left: 0; border-left: 1.500px solid #000; }
.group::after { right: 0; border-right: 1.500px solid #000; }
.group .num, .group .den { line-height: 17px; font-size: 14px; }
.g-a { width: 116px; justify-content: space-between; }
.g-b { width: 65px; justify-content: space-between; }
.gs { margin-left: -2px; }

.oval { position: absolute; border: 2px solid #777; border-radius: 50%; }
.oval-a { left: 179px; top: -11px; width: 24px; height: 16px; }
.oval-b { left: 179px; top: 23px; width: 24px; height: 20px; }
.oval-c { left: 130px; top: 107px; width: 24px; height: 16px; }
.oval-d { left: 130px; top: 128px; width: 24px; height: 16px; }
.oval-e { left: 517px; top: 123px; width: 24px; height: 20px; }
.oval-red { position: absolute; left: 590px; top: 226px; width: 142px; height: 17px; border: 2px solid #e60000; border-radius: 50%; }

/* scrollbar */
.scrollbar { width: 16px; flex: none; display: flex; flex-direction: column; background: #f3f1ea; padding-top: 2px; }
.sb-btn { height: 17px; border: 1px solid #fff; border-radius: 2px; background: linear-gradient(90deg, #dfe8fb, #bccbf3); display: flex; align-items: center; justify-content: center; flex: none; }
.sb-track { flex: 1; display: flex; flex-direction: column; justify-content: flex-end; }
.sb-thumb { height: 46px; border: 1px solid #fff; border-radius: 2px; background: linear-gradient(90deg, #cdd9fb, #b6c8f5); display: flex; align-items: center; justify-content: center; margin-bottom: 1px; }
.grip { width: 7px; height: 7px; background: repeating-linear-gradient(#eef3fe 0 1px, #8ea6dd 1px 2px); }

.side-handle { position: absolute; left: 0; top: 210px; width: 11px; height: 134px; border: 2px solid #efefef; border-left: none; border-radius: 0 6px 6px 0; background: linear-gradient(90deg, #9b9b9b, #bdbdbd); display: flex; align-items: center; }
.side-arrow { width: 0; height: 0; border: 4px solid transparent; border-left: 5px solid #fff; border-right: 0; margin-left: 1px; }

/* taskbar */
.taskbar { height: 30px; flex: none; display: flex; align-items: center; color: #fff; font-size: 10.8px;
  background: linear-gradient(#3168d5 0, #3f8cf3 2px, #2663e0 5px, #245edb 50%, #2663e0 88%, #1941a5 100%); }
.start { width: 96px; height: 30px; flex: none; display: flex; align-items: center; gap: 5px; padding-left: 10px; border-radius: 0 9px 9px 0;
  background: linear-gradient(#3c8a3c 0, #5cab55 10%, #3c933c 30%, #3e963e 70%, #2f7a2f 100%); }
.start-text { font-family: "Liberation Sans", sans-serif; font-style: italic; font-weight: 700; font-size: 17px; text-shadow: 1px 1px 1px #174a17; }
.task { width: 158px; height: 24px; margin-right: 2px; display: flex; align-items: center; gap: 3px; padding-left: 10px; border-radius: 2px; background: linear-gradient(#3f86f2, #3a7df0); white-space: nowrap; }
.task-active { margin-left: 9px; background: #1e50b4; box-shadow: inset 1px 1px 1px #123a8a; }
.tray-left { margin-left: auto; display: flex; align-items: center; white-space: nowrap; }
.lang { margin-right: 8px; }
.tray-bar { width: 1px; height: 12px; background: #0b1d55; margin-right: 9px; }
.desk { color: #7fa6ea; }
.tray-more { margin: -8px 14px 0 8px; font-size: 12px; color: #cfe0fb; }
.tray { width: 93px; height: 30px; flex: none; display: flex; align-items: center; position: relative; background: linear-gradient(#0f9be4 0, #17b6f0 3px, #0fa3ea 50%, #0c8fdc 100%); border-left: 1px solid #0b3a8c; gap: 1px; }
.tray-arrow { width: 19px; height: 19px; border-radius: 50%; border: 1px solid #d5e7fb; background: radial-gradient(circle at 60% 40%, #5aa4f0, #1d5fd0); display: flex; align-items: center; justify-content: center; margin-left: -9px; margin-right: 1px; flex: none; }
.clock { margin-left: 5px; }
```
